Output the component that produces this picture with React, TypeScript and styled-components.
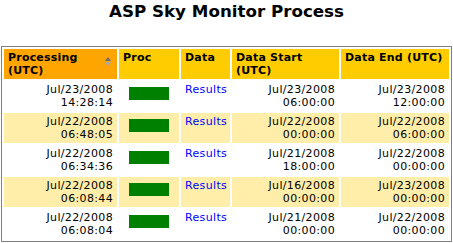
import React from 'react';
import styled, { createGlobalStyle } from 'styled-components';

const GlobalStyle = createGlobalStyle`
  html, body {
    margin: 0;
    padding: 0;
    background: #ffffff;
  }
  body {
    font-family: "DejaVu Sans", Verdana, sans-serif;
  }
`;

type Run = {
  processed: [string, string];
  start: [string, string];
  end: [string, string];
};

const runs: Run[] = [
  { processed: ['Jul/23/2008', '14:28:14'], start: ['Jul/23/2008', '06:00:00'], end: ['Jul/23/2008', '12:00:00'] },
  { processed: ['Jul/22/2008', '06:48:05'], start: ['Jul/22/2008', '00:00:00'], end: ['Jul/22/2008', '06:00:00'] },
  { processed: ['Jul/22/2008', '06:34:36'], start: ['Jul/21/2008', '18:00:00'], end: ['Jul/22/2008', '00:00:00'] },
  { processed: ['Jul/22/2008', '06:08:44'], start: ['Jul/16/2008', '00:00:00'], end: ['Jul/23/2008', '00:00:00'] },
  { processed: ['Jul/22/2008', '06:08:04'], start: ['Jul/21/2008', '00:00:00'], end: ['Jul/22/2008', '00:00:00'] }
];

const Page = styled.div`
  width: 453px;
  padding: 0 1px;
  box-sizing: border-box;
`;

const Title = styled.h1`
  margin: 0;
  height: 46px;
  padding-top: 1px;
  box-sizing: border-box;
  text-align: center;
  font-size: 16.7px;
  font-weight: bold;
  color: #000000;
  line-height: 20px;
`;

const Grid = styled.table`
  width: 451px;
  box-sizing: border-box;
  border: 1px solid #808080;
  border-spacing: 2px;
  border-collapse: separate;
  table-layout: fixed;
  font-size: 11px;
  line-height: 13px;
  letter-spacing: 0.35px;
`;

const HeadCell = styled.th<{ $active?: boolean; $w: number }>`
  box-sizing: border-box;
  width: ${(p) => p.$w}px;
  height: 30px;
  padding: 2px 4px;
  text-align: left;
  vertical-align: top;
  font-weight: bold;
  letter-spacing: 0.2px;
  background: ${(p) => (p.$active ? '#ffa500' : '#ffcc00')};
  color: #000000;
  position: relative;
`;

const SortIcon = styled.svg`
  position: absolute;
  right: 5px;
  top: 8px;
`;

const Row = styled.tr<{ $alt: boolean }>`
  background: ${(p) => (p.$alt ? '#ffeeaa' : '#ffffff')};
`;

const Cell = styled.td<{ $align?: 'left' | 'right' | 'center' }>`
  box-sizing: border-box;
  height: 30px;
  padding: 2px 4px;
  vertical-align: top;
  text-align: ${(p) => p.$align ?? 'right'};
  color: #000000;
  white-space: nowrap;
  overflow: hidden;
`;

const ProcBar = styled.div`
  width: 40px;
  height: 13px;
  margin: 4px auto 0;
  background: #008000;
`;

const ResultsLink = styled.a`
  color: #0000ff;
  text-decoration: none;
`;

const Stamp = ({ value }: { value: [string, string] }) => (
  <>
    {value[0]}
    <br />
    {value[1]}
  </>
);

const App = () => (
  <Page>
    <GlobalStyle />
    <Title>ASP Sky Monitor Process</Title>
    <Grid>
      <thead>
        <tr>
          <HeadCell $active $w={113}>
            Processing
            <br />
            (UTC)
            <SortIcon width="8" height="10" viewBox="0 0 8 10">
              <path d="M4 0 L7 4 L1 4 Z" fill="#6e6e6e" />
              <path d="M1 5 L7 5 L4 9 Z" fill="#a8a8a8" />
            </SortIcon>
          </HeadCell>
          <HeadCell $w={60}>Proc</HeadCell>
          <HeadCell $w={49}>Data</HeadCell>
          <HeadCell $w={107}>
            Data Start
            <br />
            (UTC)
          </HeadCell>
          <HeadCell $w={108}>Data End (UTC)</HeadCell>
        </tr>
      </thead>
      <tbody>
        {runs.map((run, i) => (
          <Row key={i} $alt={i % 2 === 1}>
            <Cell>
              <Stamp value={run.processed} />
            </Cell>
            <Cell $align="center">
              <ProcBar />
            </Cell>
            <Cell $align="left">
              <ResultsLink href="#">Results</ResultsLink>
            </Cell>
            <Cell>
              <Stamp value={run.start} />
            </Cell>
            <Cell>
              <Stamp value={run.end} />
            </Cell>
          </Row>
        ))}
      </tbody>
    </Grid>
  </Page>
);

export default App;
